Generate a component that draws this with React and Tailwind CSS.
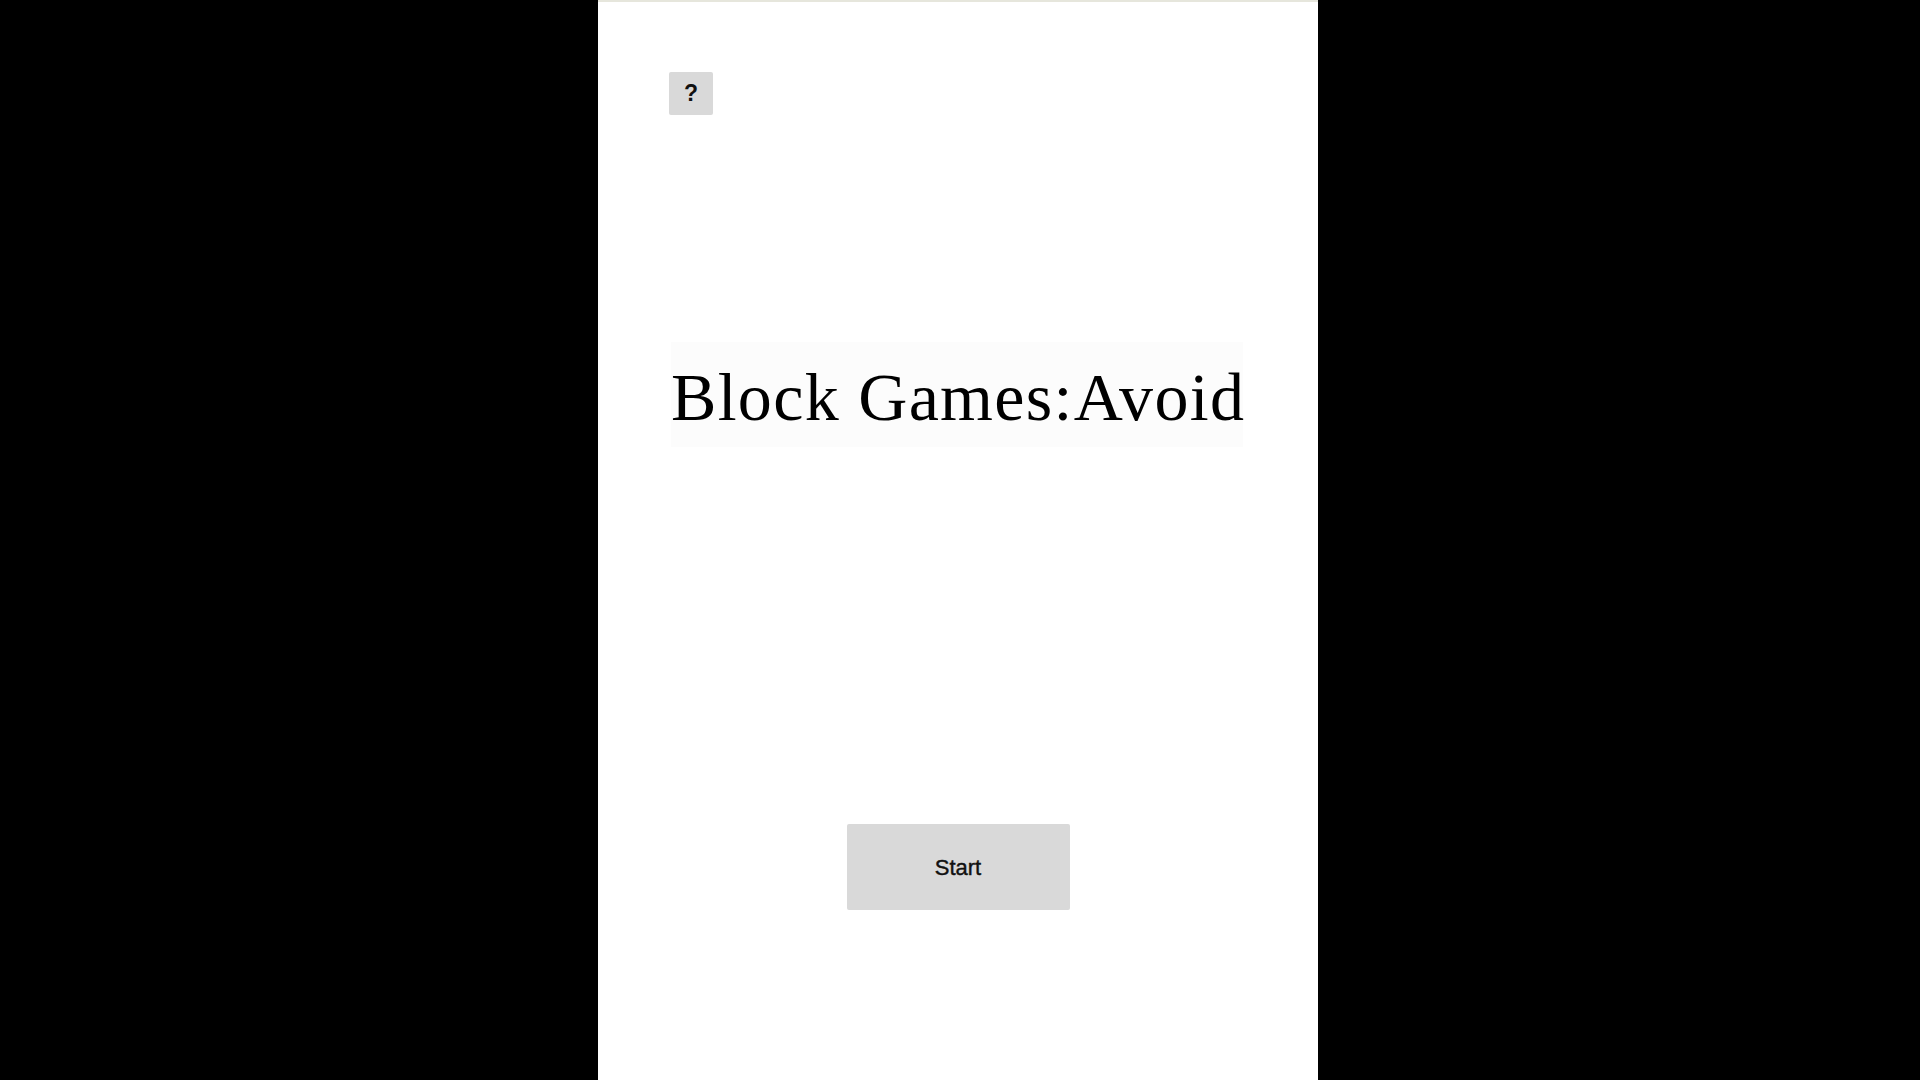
const App = () => {
    return (
        <div className="min-h-screen w-full bg-black flex justify-center pr-[4px]">
            <div className="relative w-[720px] h-screen bg-white flex flex-col border-t-2 border-[#e6e6dc]">
                <div className="pt-[70px] pl-[71px]">
                    <button className="w-[44px] h-[43px] bg-[#d9d9d9] rounded-[2px] text-[23px] font-bold text-[#111] flex items-center justify-center font-['Liberation_Sans',Arial,sans-serif]">
                        ?
                    </button>
                </div>

                <div className="mt-[227px] ml-[73px] w-[572px] h-[105px] bg-[#fcfcfc] flex items-start">
                    <h1 className="whitespace-nowrap text-[68px] leading-[110px] tracking-[1.3px] text-black font-['Liberation_Serif','Times_New_Roman',serif]">
                        Block Games:Avoid
                    </h1>
                </div>

                <div className="mt-[377px] flex justify-center">
                    <button className="w-[223px] h-[86px] bg-[#d9d9d9] rounded-[2px] text-[22px] text-[#111] [-webkit-text-stroke:0.4px_#111] font-['Liberation_Sans',Arial,sans-serif]">
                        Start
                    </button>
                </div>
            </div>
        </div>
    );
};

export default App;
